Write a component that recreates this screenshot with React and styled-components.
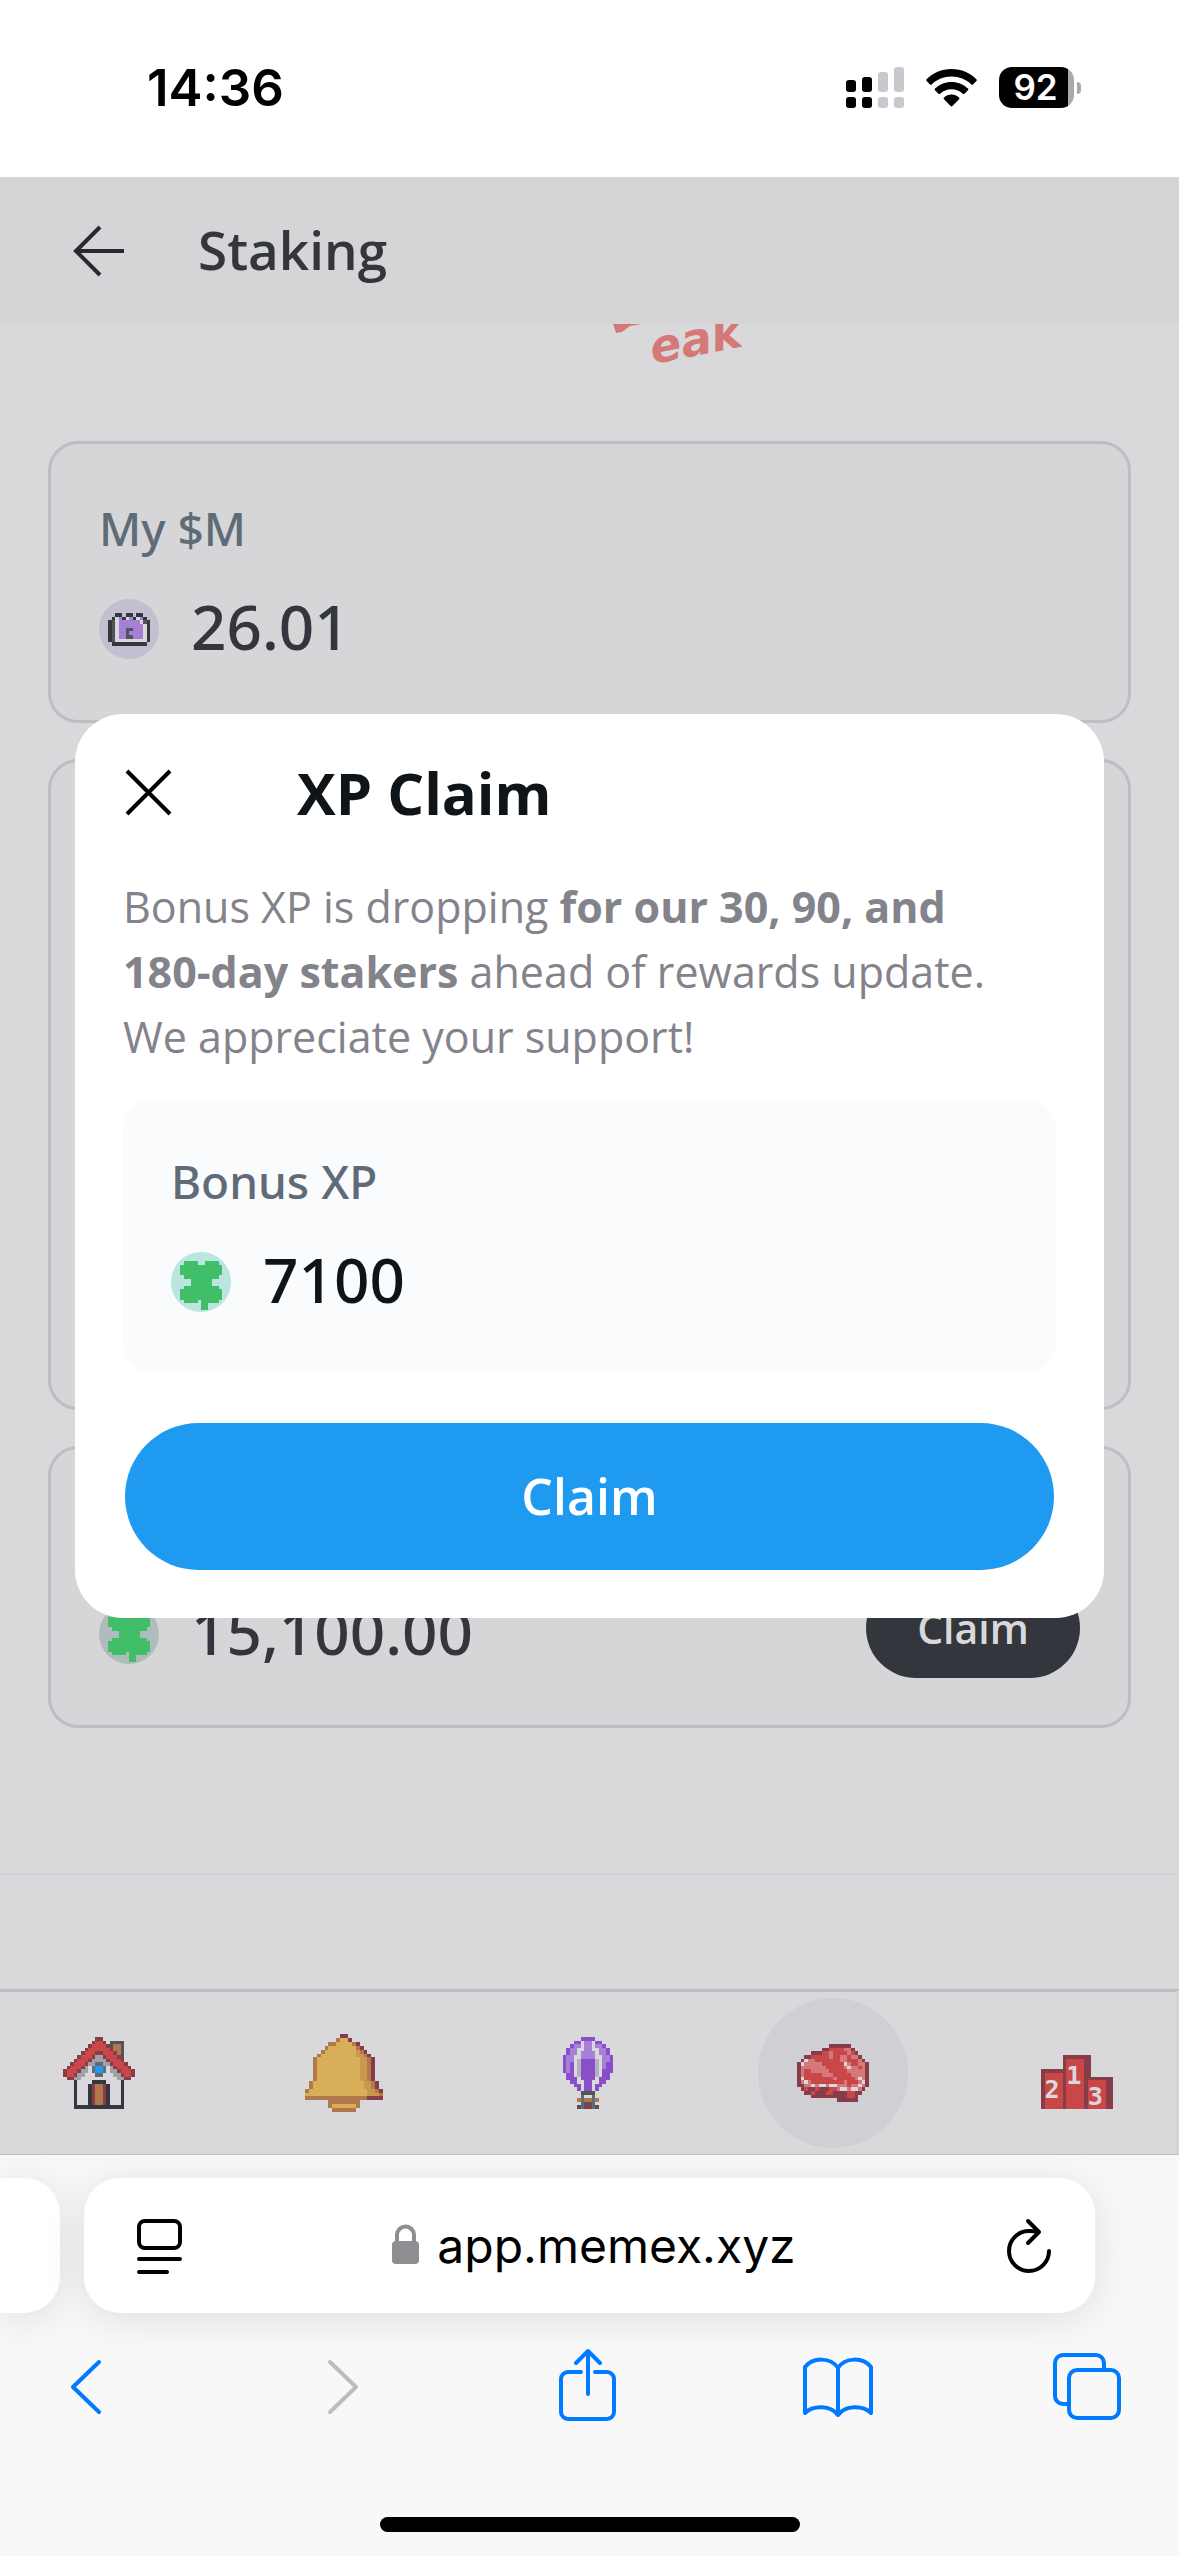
import React from 'react';
import styled, { createGlobalStyle } from 'styled-components';

const GlobalStyle = createGlobalStyle`
  * {
    box-sizing: border-box;
  }
  body {
    margin: 0;
    background: #f8f8f8;
    font-family: 'Open Sans', 'Noto Sans', sans-serif;
  }
  button {
    border: 0;
    padding: 0;
    background: none;
    font-family: inherit;
    cursor: pointer;
  }
  h1, h2, p {
    margin: 0;
  }
  svg {
    display: block;
    overflow: visible;
  }
`;

const palette = {
  D: '#873d48',
  R: '#c94749',
  L: '#d47879',
  K: '#34373c',
  G: '#55535a',
  O: '#b3774c',
  W: '#d9d8dc',
  S: '#a0a1a5',
  B: '#1d9bf0',
  T: '#606b77',
  Y: '#d9ae58',
  y: '#c8984f',
  P: '#8a4fc8',
  p: '#a580d6',
  g: '#b4b2b8',
  C: '#41be68'
};

const house = [
  '.........DD.........',
  '........DRRD.GGGG...',
  '.......DRRRRDGOOG...',
  '......DRRRRRRDOOG...',
  '.....DRRRDDRRRDOG...',
  '....DRRRDSSDRRRDG...',
  '...DRRRDSSSSDRRRD...',
  '..DRRRDSSTTSSDRRRD..',
  '.DRRRDSWTBBTWSDRRRD.',
  'DRRRDSSWTBBTWSSDRRRD',
  'DRRDSSWWWTTWWWSSDRRD',
  '.DDSSWWWWWWWWWWSSDD.',
  '...KWWWWKKKKWWWWK...',
  '...KWWWKDOODKWWWK...',
  '...KWWWKDOODKWWWK...',
  '...KWWWKDOODKWWWK...',
  '...KWWWKDOODKWWWK...',
  '...KWWWKDOODKWWWK...',
  '...KWWWKDOODKWWWK...',
  '...KKKKKKKKKKKKKK...'
];

const bell = [
  '.........DD.........',
  '........OYYD........',
  '......OOYYYYOD......',
  '.....OYYYYYYYOD.....',
  '....OYYYYYYYYyOD....',
  '...OYYYYYYYYYyyOD...',
  '..OYYYYYYYYYYYyyOD..',
  '..OYYYYYYYYYYYyyOD..',
  '..OYYYYYYYYYYYyyOD..',
  '..OYYYYYYYYYYYyyOD..',
  '..OYYYYYYYYYYYyyOD..',
  '..OYYYYYYYYYYYyyOD..',
  '.OYYYYYYYYYYYYYyyOD.',
  '.OYYYYYYYYYYYYYyyOD.',
  'OYYYYYYYYYYYYYYYyyOD',
  'YYYYYYYYYYYYYYYYyyyO',
  'OOOOOOOOOOOOOOOODDDD',
  '......OOOOOOOO......',
  '......OYYYYYYO......',
  '.......OOOOOO.......'
];

const balloon = [
  '...' + '.....PPPP.....' + '...',
  '...' + '...PPWppWPP...' + '...',
  '...' + '..PppWppWppP..' + '...',
  '...' + '.PppWWppWWppP.' + '...',
  '...' + '.PppWppppWppP.' + '...',
  '...' + 'PppWWppppWWppP' + '...',
  '...' + 'PppWgPPPPgWppP' + '...',
  '...' + 'PpPWgPPPPgWpPP' + '...',
  '...' + 'PpPWgPPPPgWpPP' + '...',
  '...' + 'PpPWgPPPPgWPPP' + '...',
  '...' + '.PPWgPPPPgWPP.' + '...',
  '...' + '.PPPWPPPPWPPP.' + '...',
  '...' + '..PPWWPPWWPP..' + '...',
  '...' + '...PPWPPWPP...' + '...',
  '...' + '....PWPPWP....' + '...',
  '...' + '.....GGGG.....' + '...',
  '...' + '.....TWWT.....' + '...',
  '...' + '....OTOOTO....' + '...',
  '...' + '...WWTGGTWW...' + '...',
  '...' + '....GTDDTG....' + '...'
];

const steak = [
  '....................',
  '....................',
  '.........DDDDDD.....',
  '.......DDRRRRLLD....',
  '....DDDRRLRRRRLRD...',
  '..DDRRRRRLRRLLRLLD..',
  '.DWLLRRRRRRRLLRRRLD.',
  'DWLLLLLRRRRRRWLRRLLD',
  'DLLLLLLLRRRRRLWLLRLD',
  'DLRRLLLLLRRRRRLLLLLD',
  'DLRRRRRLLLRRRRRLLLLD',
  'DWRRRRRRRRLRRRRRLWLD',
  'DLWLRRRRRRRRRLRRRLWD',
  'DDLLWLWWLWWLLLRLLWLD',
  '.DRDDRDDDRRLWWLWWLD.',
  '..DDRDDDRRDDDDRRDD..',
  '....DDDDDDDDDDRRD...',
  '...........DDDDDD...',
  '....................',
  '....................'
];

const podium = [
  '....................',
  '....................',
  '....................',
  '....................',
  '....................',
  '......DDDDDDDD......',
  '......DRRRRRDD......',
  '......DRRRRRDD......',
  '......DRRRRRDD......',
  'DDDDDDDRRRRRDD......',
  'DRRRRRDRRRRRDD......',
  'DRRRRRDRRRRRDDDDDDDD',
  'DRRRRRDRRRRRDRRRRRDD',
  'DRRRRRDRRRRRDRRRRRDD',
  'DRRRRRDRRRRRDRRRRRDD',
  'DRRRRRDRRRRRDRRRRRDD',
  'DRRRRRDRRRRRDRRRRRDD',
  'DRRRRRDRRRRRDRRRRRDD',
  'DRRRRRDRRRRRDRRRRRDD',
  'DRRRRRDRRRRRDRRRRRDD'
];

const chest = [
  '..KK.KK.KK..',
  '.KWpKWpKWpK.',
  'KGWppppppWGK',
  'KGWpppppppWK',
  'KGWppGGpppWK',
  'KGWppGppppWK',
  'KGWppGGpppWK',
  'KGWWWWWWWWWK',
  '.KKKKKKKKKK.'
];

const clover = [
  '............',
  '............',
  '.CCCC..CCCC.',
  'CCCCCCCCCCCC',
  'CCCCCCCCCCCC',
  'CCCCCCCCCCCC',
  '.CCCCCCCCCC.',
  '...CCCCCC...',
  '...CCCCCC...',
  '.CCCCCCCCCC.',
  'CCCCCCCCCCCC',
  'CCCCCCCCCCCC',
  'CCCCCCCCCCCC',
  '.CCCC.CCCCC.',
  '......CC....',
  '......CC....'
];

// every run of equal cells in a row becomes one rect
const PixelArt = ({ rows, width, height, children }) => {
  const rects = [];
  rows.forEach((row, y) => {
    let x = 0;
    while (x < row.length) {
      let end = x + 1;
      while (row[end] === row[x]) end++;
      if (row[x] !== '.') {
        rects.push(
          <rect key={`${x}-${y}`} x={x} y={y} width={end - x} height={1} fill={palette[row[x]]} />
        );
      }
      x = end;
    }
  });
  return (
    <svg
      width={width}
      height={height}
      viewBox={`0 0 ${rows[0].length} ${rows.length}`}
      preserveAspectRatio="none"
      aria-hidden="true"
    >
      <g shapeRendering="crispEdges">{rects}</g>
      {children}
    </svg>
  );
};

const Screen = styled.div`
  display: flex;
  flex-direction: column;
  min-height: 100vh;
`;

const StatusBar = styled.div`
  display: flex;
  align-items: center;
  justify-content: space-between;
  height: 177px;
  padding: 0 98px 2px 147px;
  background: #fff;
  font-family: Inter, 'Liberation Sans', sans-serif;
`;

const Time = styled.span`
  font-size: 51px;
  font-weight: 600;
  line-height: 60px;
`;

const StatusIcons = styled.div`
  display: flex;
  align-items: center;
  gap: 22px;
`;

const Battery = styled.div`
  display: flex;
  align-items: center;
  gap: 3px;
`;

const BatteryLevel = styled.span`
  width: 75px;
  height: 41px;
  padding-right: 2px;
  border-radius: 13px;
  background: linear-gradient(90deg, #000 69px, #a9a9ad 69px);
  color: #fff;
  font-size: 35px;
  font-weight: 600;
  line-height: 41px;
  text-align: center;
`;

const BatteryCap = styled.span`
  width: 4px;
  height: 12px;
  border-radius: 0 4px 4px 0;
  background: #a9a9ad;
`;

const AppView = styled.div`
  position: relative;
  flex: 1;
  display: flex;
  flex-direction: column;
  background: #d9d9db;
  border-bottom: 1px solid #b9bfc4;
`;

const Header = styled.header`
  display: flex;
  align-items: center;
  gap: 72px;
  height: 147px;
  padding: 0 72px;
  background: #d5d5d7;
`;

const Title = styled.h1`
  padding-bottom: 2px;
  color: #33363c;
  font-size: 53px;
  font-weight: 600;
  line-height: 72px;
`;

const IconButton = styled.button`
  display: flex;
  align-items: center;
  justify-content: center;
`;

const Hero = styled.div`
  height: 117px;
  overflow: hidden;
`;

const Cards = styled.main`
  flex: 1;
  display: flex;
  flex-direction: column;
  gap: 36px;
  padding: 0 48px;
`;

const Card = styled.section`
  display: flex;
  flex-direction: column;
  justify-content: flex-end;
  gap: 20px;
  min-height: ${props => (props.$tall ? '651px' : '282px')};
  padding: 48px;
  border: 3px solid #babfc4;
  border-radius: 30px;
  background: #d6d6d8;
`;

const Panel = styled.div`
  display: flex;
  flex-direction: column;
  gap: 20px;
  margin-top: 30px;
  padding: 48px;
  border-radius: 30px;
  background: #fafbfd;
`;

const Label = styled.p`
  padding-bottom: 4px;
  color: #606b78;
  font-family: 'Noto Sans', 'Open Sans', sans-serif;
  font-size: 46px;
  font-weight: 500;
  line-height: 68px;
`;

const ValueRow = styled.div`
  display: flex;
  align-items: center;
  gap: 32px;
  height: 86px;
`;

const Coin = styled.span`
  display: flex;
  align-items: center;
  justify-content: center;
  width: 60px;
  height: 60px;
  border-radius: 50%;
  background: ${props => props.$color};
`;

const Value = styled.span`
  padding-bottom: 6px;
  color: ${props => props.$color || '#33363c'};
  font-family: 'Noto Sans', 'Open Sans', sans-serif;
  font-size: 62px;
  font-weight: 500;
  line-height: 80px;
`;

const SmallButton = styled.button`
  width: 214px;
  height: 100px;
  margin: 0 0 12px auto;
  border-radius: 50px;
  background: #33363c;
  color: #d9d9db;
  font-size: 41px;
  font-weight: 600;
`;

const PageEnd = styled.div`
  height: 116px;
  border-top: 2px solid #d1d2d5;
`;

const Nav = styled.nav`
  display: flex;
  align-items: center;
  justify-content: space-between;
  height: 165px;
  padding: 0 24px;
  border-top: 3px solid #b9bec3;
  border-right: 3px solid #d2d3d6;
`;

const NavButton = styled.button`
  display: flex;
  align-items: center;
  justify-content: center;
  width: 150px;
  height: 150px;
  border-radius: 50%;
  background: ${props => (props.$active ? '#d0d0d4' : 'none')};
`;

const Overlay = styled.div`
  position: absolute;
  inset: 0;
  display: flex;
  align-items: center;
  padding: 0 75px;
`;

const Modal = styled.div`
  flex: 1;
  padding: 46px 48px 48px;
  border-radius: 48px;
  background: #fff;
`;

const ModalHeader = styled.div`
  display: flex;
  align-items: center;
  gap: 120px;
  height: 66px;
`;

const ModalTitle = styled.h2`
  color: #0f1419;
  font-size: 58px;
  font-weight: 700;
  line-height: 66px;
`;

const ModalText = styled.p`
  margin-top: 48px;
  color: #83838b;
  font-size: 43px;
  line-height: 65px;

  strong {
    font-weight: 700;
  }
`;

const PrimaryButton = styled.button`
  display: block;
  width: calc(100% - 4px);
  height: 147px;
  margin: 50px auto 0;
  border-radius: 74px;
  background: #1e9bf1;
  color: #fff;
  font-size: 50px;
  font-weight: 600;
`;

const Browser = styled.footer`
  position: relative;
  padding-top: 23px;
  background: #f8f8f8;
  font-family: Inter, 'Liberation Sans', sans-serif;
`;

const Tabs = styled.div`
  display: flex;
  gap: 24px;
  overflow: hidden;
  margin-top: -60px;
  padding: 60px 84px 60px 0;
`;

const SideTab = styled.div`
  width: 60px;
  height: 135px;
  border-radius: 0 36px 36px 0;
  background: #fff;
  box-shadow: 0 6px 42px rgba(0, 0, 0, 0.1);
`;

const AddressBar = styled.div`
  flex: 1;
  display: flex;
  align-items: center;
  justify-content: space-between;
  height: 135px;
  padding: 0 42px 0 51px;
  border-radius: 36px;
  background: #fff;
  box-shadow: 0 6px 42px rgba(0, 0, 0, 0.1);
`;

const Address = styled.a`
  display: flex;
  align-items: center;
  gap: 18px;
  color: #000;
  font-size: 48px;
  line-height: 60px;
  text-decoration: none;
`;

const Toolbar = styled.div`
  display: flex;
  align-items: center;
  justify-content: space-between;
  height: 96px;
  margin-top: -34px;
  padding: 0 56px 0 50px;
`;

const HomeIndicator = styled.div`
  width: 420px;
  height: 15px;
  margin: 82px auto 24px;
  border-radius: 8px;
  background: #000;
`;

const SignalIcon = () => (
  <svg width="58" height="41" viewBox="0 0 58 41" aria-hidden="true">
    <rect x="0" y="13" width="10" height="12" rx="3" />
    <rect x="16" y="10" width="10" height="15" rx="3" />
    <rect x="32" y="5" width="10" height="20" rx="3" fill="#c9c8ce" />
    <rect x="48" y="0" width="10" height="25" rx="3" fill="#c9c8ce" />
    <rect x="0" y="30" width="10" height="11" rx="3" />
    <rect x="16" y="30" width="10" height="11" rx="3" />
    <rect x="32" y="30" width="10" height="11" rx="3" fill="#c9c8ce" />
    <rect x="48" y="30" width="10" height="11" rx="3" fill="#c9c8ce" />
  </svg>
);

const WifiIcon = () => (
  <svg width="51" height="38" viewBox="0 0 51 38" aria-hidden="true">
    <path d="M25.500 0C35.500 0 44.200 4 50.400 10.200c.5.500.5 1.200 0 1.700l-3.400 3.500c-.5.500-1.200.5-1.700 0C40 10.400 33.200 7.500 25.500 7.500S11 10.400 5.700 15.400c-.5.500-1.200.5-1.700 0L.6 11.900c-.5-.5-.5-1.200 0-1.700C6.800 4 15.500 0 25.500 0z" />
    <path d="M25.500 12.900c6.400 0 12.200 2.500 16.500 6.600.5.500.5 1.200 0 1.700l-3.500 3.500c-.5.500-1.200.5-1.700 0-2.900-2.700-6.900-4.400-11.300-4.400s-8.400 1.700-11.300 4.400c-.5.500-1.200.5-1.700 0L9 21.200c-.5-.5-.5-1.200 0-1.700 4.300-4.100 10.100-6.600 16.500-6.600z" />
    <path d="M25.500 25.600c2.900 0 5.500 1.100 7.500 2.900.5.500.5 1.200 0 1.700l-6.600 6.900c-.5.500-1.300.5-1.800 0L18 30.200c-.5-.5-.5-1.200 0-1.700 2-1.800 4.600-2.900 7.500-2.900z" />
  </svg>
);

const BackArrow = () => (
  <svg width="54" height="54" viewBox="0 0 54 54" fill="none" stroke="#26292d" strokeWidth="4">
    <path d="M52 27H5M28 3L4 27l24 24" />
  </svg>
);

const CloseIcon = () => (
  <svg width="54" height="54" viewBox="0 0 54 54" fill="none" stroke="#000" strokeWidth="4">
    <path d="M4 5l43 43M47 5L4 48" />
  </svg>
);

// tail of the banner lettering that is scrolled under the header
const BannerTail = () => (
  <svg width="180" height="60" viewBox="600 324 180 60" fill="#d47878">
    <path d="M613 324h29l-12 2-8 6-6 1z" />
    <text
      transform="translate(653 364) rotate(-11)"
      fontFamily="'DejaVu Sans', sans-serif"
      fontSize="46"
      fontStyle="italic"
      fontWeight="700"
    >
      eak
    </text>
  </svg>
);

const BannerHolder = styled.div`
  display: flex;
  justify-content: center;
  padding-left: 201px;
`;

const PageIcon = () => (
  <svg width="48" height="56" viewBox="0 0 48 56" fill="none" stroke="#000" strokeWidth="4" strokeLinecap="round">
    <rect x="4" y="3" width="41" height="27" rx="6" />
    <path d="M4 41h41M4 54h28" />
  </svg>
);

const LockIcon = () => (
  <svg width="27" height="44" viewBox="0 0 27 44" aria-hidden="true">
    <path d="M5 18v-7a8 8 0 0 1 17 0v7" fill="none" stroke="#8e8e93" strokeWidth="4" />
    <rect x="0" y="17" width="27" height="23" rx="4" fill="#8e8e93" />
  </svg>
);

const ReloadIcon = () => (
  <svg width="48" height="56" viewBox="0 0 48 56" fill="none" stroke="#000" strokeWidth="4" strokeLinecap="round" strokeLinejoin="round">
    <path d="M44 33a20 20 0 1 1-20-20c3 0 6 0 8 1" />
    <path d="M23 3l11 11-11 11" />
  </svg>
);

const ToolIcon = ({ d, color = '#007aff' }) => (
  <svg
    width="72"
    height="78"
    viewBox="0 0 72 78"
    fill="none"
    stroke={color}
    strokeWidth="4"
    strokeLinecap="round"
    strokeLinejoin="round"
  >
    <path d={d} />
  </svg>
);

const tools = [
  { name: 'Back', d: 'M49 14L23 39l26 25' },
  { name: 'Forward', d: 'M30 14l26 25-26 25', color: '#b9bec3' },
  {
    name: 'Share',
    d: 'M30 24h-13a7 7 0 0 0-7 7v33a7 7 0 0 0 7 7h39a7 7 0 0 0 7-7V31a7 7 0 0 0-7-7H44M37 46V4M25 15L37 3l12 12'
  },
  {
    name: 'Bookmarks',
    d: 'M37 20C30 9 12 9 4 19v46C12 57 30 57 37 67C44 57 62 57 70 65V19C62 9 44 9 37 20zM37 20v46'
  },
  {
    name: 'Tabs',
    d: 'M26 22h34a8 8 0 0 1 8 8v32a8 8 0 0 1-8 8H26a8 8 0 0 1-8-8V30a8 8 0 0 1 8-8zM18 56h-6a8 8 0 0 1-8-8V15a8 8 0 0 1 8-8h33a8 8 0 0 1 8 8v7'
  }
];

const navItems = [
  { name: 'Home', rows: house, size: 72 },
  { name: 'Notifications', rows: bell, size: 78 },
  { name: 'Explore', rows: balloon, size: 72 },
  { name: 'Staking', rows: steak, size: 72, active: true },
  { name: 'Leaderboard', rows: podium, size: 72 }
];

const PodiumDigits = () => (
  <g fill="#d9d8dc" fontFamily="'DejaVu Sans Mono', monospace" fontSize="7" fontWeight="700">
    <text x="1" y="17">2</text>
    <text x="7" y="13">1</text>
    <text x="13" y="19">3</text>
  </g>
);

const Clover = () => (
  <PixelArt rows={clover} width={42} height={56} />
);

const App = () => (
  <Screen>
    <GlobalStyle />
    <StatusBar>
      <Time>14:36</Time>
      <StatusIcons>
        <SignalIcon />
        <WifiIcon />
        <Battery>
          <BatteryLevel>92</BatteryLevel>
          <BatteryCap />
        </Battery>
      </StatusIcons>
    </StatusBar>

    <AppView>
      <Header>
        <IconButton aria-label="Back">
          <BackArrow />
        </IconButton>
        <Title>Staking</Title>
      </Header>
      <Hero>
        <BannerHolder>
          <BannerTail />
        </BannerHolder>
      </Hero>
      <Cards>
        <Card>
          <Label>My $M</Label>
          <ValueRow>
            <Coin $color="#c4bfd0">
              <PixelArt rows={chest} width={42} height={33} />
            </Coin>
            <Value>26.01</Value>
          </ValueRow>
        </Card>
        <Card $tall />
        <Card>
          <ValueRow>
            <Coin $color="#b0bcbb">
              <Clover />
            </Coin>
            <Value>15,100.00</Value>
            <SmallButton>Claim</SmallButton>
          </ValueRow>
        </Card>
      </Cards>
      <PageEnd />
      <Nav>
        {navItems.map(item => (
          <NavButton key={item.name} $active={item.active} aria-label={item.name}>
            <PixelArt rows={item.rows} width={item.size} height={item.size}>
              {item.rows === podium && <PodiumDigits />}
            </PixelArt>
          </NavButton>
        ))}
      </Nav>

      <Overlay>
        <Modal role="dialog" aria-labelledby="claim-title">
          <ModalHeader>
            <IconButton aria-label="Close">
              <CloseIcon />
            </IconButton>
            <ModalTitle id="claim-title">XP Claim</ModalTitle>
          </ModalHeader>
          <ModalText>
            Bonus XP is dropping <strong>for our 30, 90, and<br />180-day stakers</strong> ahead of
            rewards update.
            <br />
            We appreciate your support!
          </ModalText>
          <Panel>
            <Label>Bonus XP</Label>
            <ValueRow>
              <Coin $color="#bbe5df">
                <Clover />
              </Coin>
              <Value $color="#0f1419">7100</Value>
            </ValueRow>
          </Panel>
          <PrimaryButton>Claim</PrimaryButton>
        </Modal>
      </Overlay>
    </AppView>

    <Browser>
      <Tabs>
        <SideTab />
        <AddressBar>
          <IconButton aria-label="Page settings">
            <PageIcon />
          </IconButton>
          <Address href="#">
            <LockIcon />
            app.memex.xyz
          </Address>
          <IconButton aria-label="Reload">
            <ReloadIcon />
          </IconButton>
        </AddressBar>
      </Tabs>
      <Toolbar>
        {tools.map(tool => (
          <IconButton key={tool.name} aria-label={tool.name}>
            <ToolIcon d={tool.d} color={tool.color} />
          </IconButton>
        ))}
      </Toolbar>
      <HomeIndicator />
    </Browser>
  </Screen>
);

export default App;
